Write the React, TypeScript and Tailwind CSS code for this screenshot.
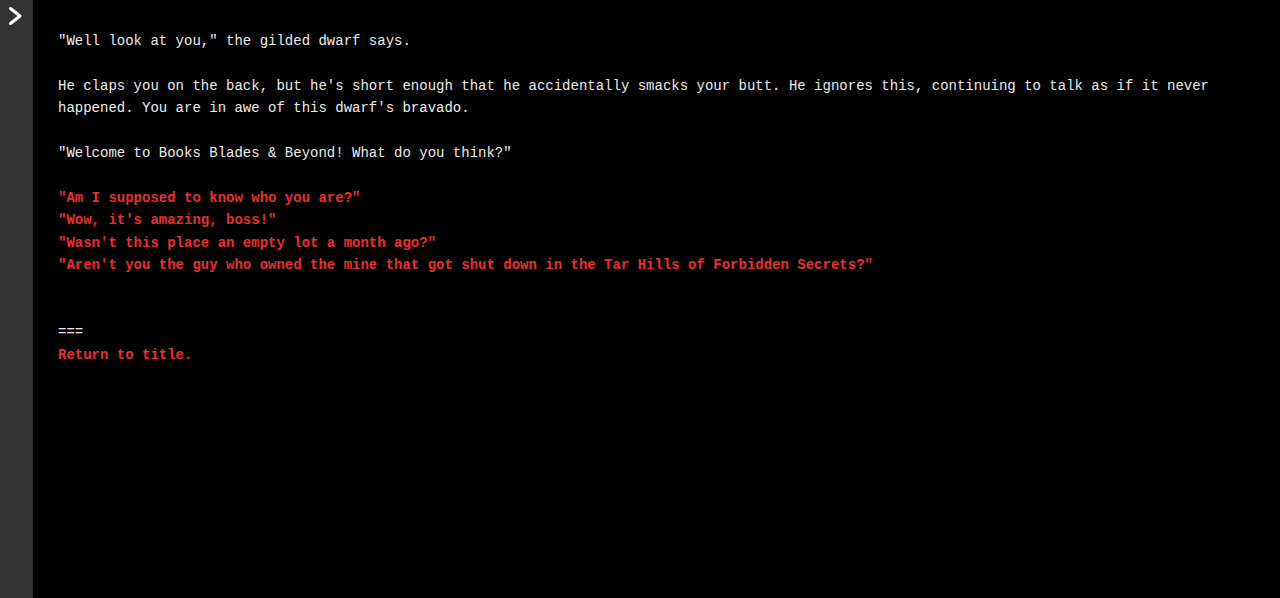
const CHOICES = [
  '"Am I supposed to know who you are?"',
  '"Wow, it\'s amazing, boss!"',
  '"Wasn\'t this place an empty lot a month ago?"',
  '"Aren\'t you the guy who owned the mine that got shut down in the Tar Hills of Forbidden Secrets?"',
];

export default function App() {
  return (
    <div className="flex h-[598px] w-full bg-black font-['Liberation_Mono',monospace] text-[14px] leading-[22.4px] text-[#ececec]">
      <aside className="w-[33px] shrink-0 bg-[#333333]">
        <svg width="33" height="32" viewBox="0 0 33 32" className="text-white">
          <polyline points="10.5,8.5 20,16 10.5,23.5" fill="none" stroke="currentColor" strokeWidth="3" strokeLinecap="round" strokeLinejoin="round" />
        </svg>
      </aside>
      <main className="flex-1 pl-[25px] pr-[25px] pt-[30px]">
        <p>"Well look at you," the gilded dwarf says.</p>
        <p className="mt-[22.4px]">
          He claps you on the back, but he's short enough that he accidentally smacks your butt. He ignores this, continuing to talk as if it never happened. You are in awe of this dwarf's bravado.
        </p>
        <p className="mt-[22.4px]">"Welcome to Books Blades &amp; Beyond! What do you think?"</p>
        <ul className="mt-[22.4px] font-bold text-[#e8302f]">
          {CHOICES.map((c) => (
            <li key={c} className="cursor-pointer hover:underline">{c}</li>
          ))}
        </ul>
        <p className="mt-[44.8px]">===</p>
        <p className="cursor-pointer font-bold text-[#e8302f] hover:underline">Return to title.</p>
      </main>
    </div>
  );
}
